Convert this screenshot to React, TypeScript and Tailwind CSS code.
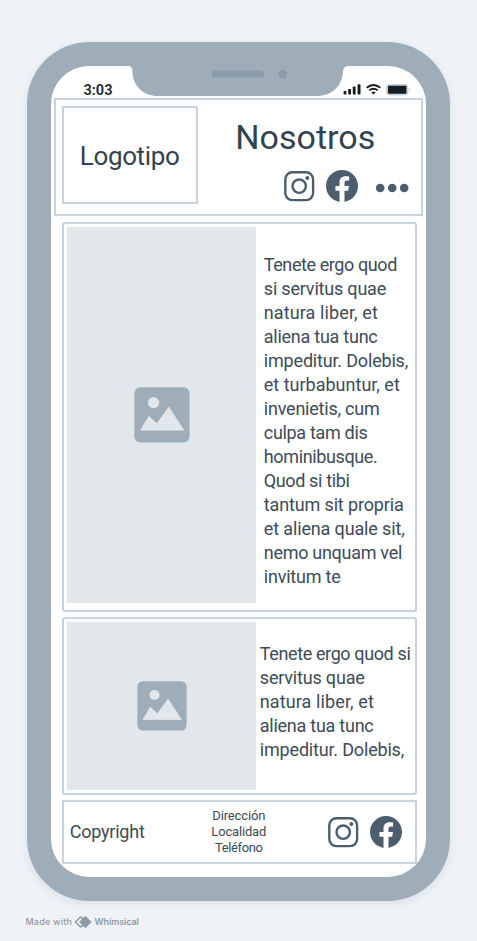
import { useLayoutEffect, useRef, useState } from "react";

// Spreads the letters of one line of text so that it fills the given width.
function Line({ text, width, className = "" }: { text: string; width: number; className?: string }) {
  const ref = useRef<HTMLSpanElement>(null);
  const [spacing, setSpacing] = useState(0);
  useLayoutEffect(() => {
    const el = ref.current;
    if (!el) return;
    const old = el.style.letterSpacing;
    el.style.letterSpacing = "0px";
    const natural = el.getBoundingClientRect().width;
    el.style.letterSpacing = old;
    setSpacing((width - natural) / (text.length - 1));
  }, [text, width]);
  return (
    <span className={`block whitespace-nowrap ${className}`}>
      <span ref={ref} style={{ letterSpacing: `${spacing}px` }}>{text}</span>
    </span>
  );
}

function Instagram() {
  return (
    <svg className="h-8 w-8 shrink-0" viewBox="0 0 32 32" fill="none" stroke="#4c5e6d">
      <rect x="2.3" y="2.3" width="27.8" height="27.8" rx="7" strokeWidth="2.4" />
      <circle cx="16.2" cy="16.2" r="6.7" strokeWidth="2.4" />
      <circle cx="24.3" cy="8.1" r="2" fill="#4c5e6d" stroke="none" />
    </svg>
  );
}

function Facebook() {
  return (
    <svg className="h-8 w-8 shrink-0" viewBox="0 0 24 24" fill="#4c5e6d">
      <path d="M24 12.073c0-6.627-5.373-12-12-12s-12 5.373-12 12c0 5.99 4.388 10.954 10.125 11.854v-8.385H7.078v-3.47h3.047V9.43c0-3.007 1.792-4.669 4.533-4.669 1.312 0 2.686.235 2.686.235v2.953H15.83c-1.491 0-1.956.925-1.956 1.874v2.25h3.328l-.532 3.47h-2.796v8.385C19.612 23.027 24 18.062 24 12.073z" />
    </svg>
  );
}

function Picture({ className }: { className: string }) {
  return (
    <svg className={className} viewBox="0 0 56 56">
      <rect x="0.4" y="0.2" width="55.2" height="55.2" rx="6" fill="#9fadb9" />
      <circle cx="19.6" cy="15.6" r="5.6" fill="#e2e7eb" />
      <path d="M6.8 43L15 29.4L22.8 36.8L34.8 20.4L49.6 43Z" fill="#e2e7eb" stroke="#e2e7eb" strokeWidth="1" strokeLinejoin="round" />
    </svg>
  );
}

const longText: [string, number][] = [
  ["Tenete ergo quod", 133.5],
  ["si servitus quae", 122.5],
  ["natura liber, et", 114],
  ["aliena tua tunc", 114],
  ["impeditur. Dolebis,", 144.5],
  ["et turbabuntur, et", 136],
  ["invenietis, cum", 116],
  ["culpa tam dis", 104],
  ["hominibusque.", 114],
  ["Quod si tibi", 86],
  ["tantum sit propria", 140],
  ["et aliena quale sit,", 141],
  ["nemo unquam vel", 138.5],
  ["invitum te", 77],
];

const shortText: [string, number][] = [
  ["Tenete ergo quod si", 151],
  ["servitus quae", 105],
  ["natura liber, et", 114],
  ["aliena tua tunc", 114],
  ["impeditur. Dolebis,", 144.5],
];

export default function App() {
  return (
    <div className="flex h-[941px] w-[477px] flex-col overflow-hidden bg-[#eff3f6] pl-[26.6px] pt-[42px] font-['Roboto',sans-serif] text-[#3d4b57]">
      <div className="h-[859.4px] w-[423.7px] shrink-0 rounded-[62px] bg-[#9fadb9] p-[24.2px] shadow-[0_3px_10px_rgba(90,110,130,0.13)]">
        <div className="flex h-[811px] w-[375.3px] flex-col overflow-hidden rounded-[38px] bg-white">
          <div className="relative flex h-[31.4px] shrink-0 justify-between pl-[32.7px] pr-[15px]">
            <svg className="absolute left-[78px] top-0 h-[30px] w-[219px]" viewBox="0 0 219 30">
              <path d="M0 0H219Q214 0.6 214 6C213 20 203 30 188 30H29C14 30 4 20 3.5 6Q3.5 0.6 0 0Z" fill="#9fadb9" />
              <rect x="82.5" y="4.5" width="52.5" height="7" rx="3.5" fill="#8c9bab" />
              <circle cx="153.8" cy="8" r="4.5" fill="#8c9bab" />
            </svg>
            <Line text="3:03" width={29} className="pt-[15px] text-[14.5px] font-bold leading-[20px] text-[#27303a]" />
            <svg className="mt-[15px] h-[16px] w-[68px]" viewBox="0 0 68 16" fill="#141c24">
              <rect x="0.6" y="10" width="2.8" height="3.5" rx="0.7" />
              <rect x="5.2" y="8" width="2.8" height="5.5" rx="0.7" />
              <rect x="9.8" y="5.5" width="2.8" height="8" rx="0.7" />
              <rect x="14.6" y="3.2" width="2.9" height="10.3" rx="0.7" />
              <g fill="none" stroke="#141c24" strokeWidth="1.8">
                <path d="M23.6 6.8Q30.5 1.1 37.4 6.8" />
                <path d="M26.2 9.4Q30.5 6 34.8 9.4" />
              </g>
              <path d="M28.4 11.4Q30.5 9.8 32.6 11.4L30.5 13.6Z" />
              <rect x="43" y="3" width="22.2" height="11.6" rx="3" fill="#ccd0d3" />
              <rect x="45" y="4.8" width="18.4" height="8" rx="1" />
              <path d="M65.9 6.8Q67.8 8.6 65.9 10.5Z" fill="#a9afb4" />
            </svg>
          </div>

          <header className="ml-[3px] flex h-[118.4px] w-[369.5px] shrink-0 border-2 border-[#c7d3de] bg-white pl-[6px] pt-[6px]">
            <div className="flex h-[98px] w-[136.5px] shrink-0 items-center border-2 border-[#c7d3de] pl-[16px] pt-[2px]">
              <Line text="Logotipo" width={100} className="text-[26px] leading-[30px] text-[#33424f]" />
            </div>
            <div className="flex grow flex-col pl-[37px]">
              <Line text="Nosotros" width={140} className="pt-[11px] text-[34px] leading-[40px] text-[#33424f]" />
              <div className="ml-[48px] mt-[13.6px] flex items-center gap-[10.8px]">
                <Instagram />
                <Facebook />
                <svg className="ml-[6px] mt-[4px] h-[10px] w-[35px]" viewBox="0 0 35 10" fill="#4c5e6d">
                  <circle cx="5.2" cy="5" r="4.3" />
                  <circle cx="17.2" cy="5" r="4.3" />
                  <circle cx="29.2" cy="5" r="4.3" />
                </svg>
              </div>
            </div>
          </header>

          <section className="ml-[11px] mt-[6px] flex h-[390px] w-[355px] shrink-0 rounded-[3px] border-2 border-[#c7d3de] pl-[3.5px] pt-[3px]">
            <div className="flex h-[376px] w-[189px] shrink-0 items-center justify-center bg-[#e2e7eb]">
              <Picture className="h-14 w-14" />
            </div>
            <div className="pl-[7.5px] pt-[26px] text-[18px] leading-[24px]">
              {longText.map(([text, width]) => <Line key={text} text={text} width={width} />)}
            </div>
          </section>

          <section className="ml-[11px] mt-[5px] flex h-[178px] w-[355px] shrink-0 rounded-[3px] border-2 border-[#c7d3de] pl-[3.5px] pt-[3px]">
            <div className="flex h-[168px] w-[189px] shrink-0 items-center justify-center bg-[#e2e7eb]">
              <Picture className="h-[50px] w-[50px]" />
            </div>
            <div className="pl-[3.5px] pt-[20px] text-[18px] leading-[24px]">
              {shortText.map(([text, width]) => <Line key={text} text={text} width={width} />)}
            </div>
          </section>

          <footer className="ml-[11px] mt-[5px] flex h-[64px] w-[355px] shrink-0 items-center border-2 border-[#c7d3de]">
            <Line text="Copyright" width={75} className="w-[122px] pl-[6px] text-[18px] leading-[24px]" />
            <div className="flex w-[106px] flex-col items-center text-[13px] leading-[16px]">
              <Line text="Dirección" width={53} />
              <Line text="Localidad" width={55} />
              <Line text="Teléfono" width={48} />
            </div>
            <div className="ml-[34.8px] flex gap-[11px]">
              <Instagram />
              <Facebook />
            </div>
          </footer>
        </div>
      </div>

      <div className="-ml-[1.2px] mt-[12.6px] flex h-[16px] items-center font-['Inter',sans-serif] text-[9px] font-medium leading-[14px] text-[#8f9ba6]">
        <Line text="Made with" width={46.5} className="w-[49px]" />
        <svg className="h-[14px] w-[19px]" viewBox="0 0 19 14">
          <path d="M6.8 1.7L1.4 7L6.8 12.3" fill="none" stroke="#8f9ba6" strokeWidth="1.5" strokeLinejoin="round" />
          <path d="M6.8 1.7L9 4M6.8 12.3L9 10" fill="none" stroke="#8f9ba6" strokeWidth="1.5" />
          <path d="M11.4 1.2L17.2 7L11.4 12.8L5.6 7Z" fill="#8f9ba6" stroke="#8f9ba6" strokeLinejoin="round" />
        </svg>
        <Line text="Whimsical" width={44.5} className="ml-[1px] font-semibold" />
      </div>
    </div>
  );
}
